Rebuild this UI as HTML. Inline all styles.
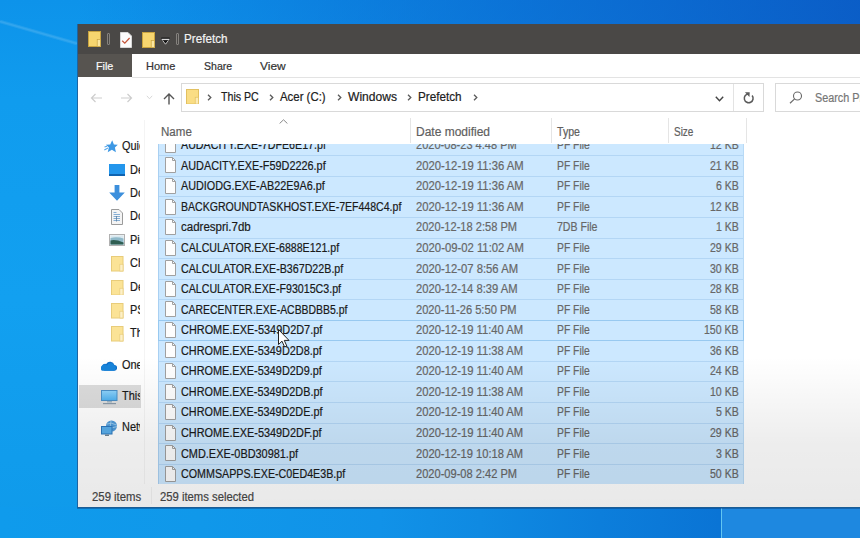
<!DOCTYPE html><html><head><meta charset="utf-8"><style>
*{box-sizing:border-box;margin:0;padding:0}
html,body{width:860px;height:538px;overflow:hidden}
body{position:relative;font-family:"Liberation Sans",sans-serif;font-size:12px;color:#1e1e1e;
background:linear-gradient(180deg,#0d93ea 0px,#109cee 100px,#12a0f0 300px,#0f9aea 538px)}
.a{position:absolute;white-space:nowrap}
.t{position:absolute;white-space:nowrap;transform-origin:0 0;line-height:1;-webkit-text-stroke:0.2px currentColor}
</style></head><body>
<div class="a" style="left:0;top:0;width:860px;height:40px;background:linear-gradient(90deg,rgba(10,100,210,0) 77px,rgba(10,100,210,0.2) 200px,rgba(10,90,200,0.55) 500px,rgba(10,80,190,0.8) 860px)"></div>
<svg style="position:absolute;left:0;top:0" width="77" height="80" viewBox="0 0 77 80"><path d="M0 21.5 L77 43.5" stroke="rgba(255,255,255,0.09)" stroke-width="3.5"/><path d="M0 21.5 L77 43.5" stroke="rgba(255,255,255,0.08)" stroke-width="1.4"/></svg>
<div class="a" style="left:0;top:507px;width:860px;height:31px;background:linear-gradient(90deg,#0f9bec 0px,#1098ea 200px,#1192e8 380px,#0f8ae2 480px,#0c7edb 600px,#0a74d5 720px)"></div>
<div class="a" style="left:720.5px;top:507px;width:1.5px;height:31px;background:#62c6f2"></div>
<div class="a" style="left:722px;top:507px;width:138px;height:31px;background:#1e88e0"></div>
<div class="a" style="left:77px;top:24px;width:783px;height:484px;background:#fff;border-left:1px solid #1d64a2;border-bottom:1px solid #1b5d95;box-shadow:0 1px 0 rgba(10,60,120,0.45)"></div>
<div class="a" style="left:78px;top:24px;width:782px;height:30px;background:#4a4846"></div>
<svg style="position:absolute;left:87.5px;top:30.8px" width="13" height="16" viewBox="0 0 13 16" preserveAspectRatio="none"><rect x="0.5" y="0.5" width="12" height="15" fill="#f7d66f" stroke="#c9a440" stroke-width="1"/><rect x="9.2" y="8.5" width="3.3" height="7" fill="#fbe6a0" stroke="#c9a440" stroke-width="0.7"/></svg>
<div class="a" style="left:107px;top:33px;width:3px;height:12px;border:1px solid #85827e;border-radius:1px"></div>
<svg style="position:absolute;left:120px;top:32px" width="12" height="16" viewBox="0 0 12 16"><path d="M0.5 0.5 H8 L11.5 4 V15.5 H0.5 Z" fill="#fbfbfb" stroke="#d6d6d6" stroke-width="1"/><path d="M2.2 8.8 L4.8 11.2 L9.6 6" fill="none" stroke="#c4553a" stroke-width="1.25"/></svg>
<svg style="position:absolute;left:141.5px;top:31.6px" width="13" height="16" viewBox="0 0 13 16" preserveAspectRatio="none"><rect x="0.5" y="0.5" width="12" height="15" fill="#f7d66f" stroke="#c9a440" stroke-width="1"/><rect x="9.2" y="8.5" width="3.3" height="7" fill="#fbe6a0" stroke="#c9a440" stroke-width="0.7"/></svg>
<svg style="position:absolute;left:161px;top:37px" width="9" height="8" viewBox="0 0 9 8"><rect x="0.3" y="0.6" width="8.4" height="2.6" fill="#111"/><rect x="0.6" y="1.8" width="7.8" height="1.1" fill="#f0f0f0"/><path d="M1.6 3.4 L4.5 7.2 L7.4 3.4" fill="#111" stroke="#e8e8e8" stroke-width="0.8"/></svg>
<div class="a" style="left:175.5px;top:33px;width:3px;height:12px;border:1px solid #85827e;border-radius:1px"></div>
<div class="t" style="left:184.06px;top:33.47px;font-size:12.5px;color:#f2f2f2;transform:scaleX(0.9354)">Prefetch</div>
<div class="a" style="left:78px;top:54px;width:54px;height:23px;background:#575450"></div>
<div class="t" style="left:95.97px;top:61.06px;font-size:11px;color:#fafafa;transform:scaleX(0.9794)">File</div>
<div class="t" style="left:145.88px;top:60.96px;font-size:11px;color:#333;transform:scaleX(1.0016)">Home</div>
<div class="t" style="left:203.58px;top:60.96px;font-size:11px;color:#333;transform:scaleX(0.9588)">Share</div>
<div class="t" style="left:259.88px;top:61.06px;font-size:11px;color:#333;transform:scaleX(1.0853)">View</div>
<div class="a" style="left:132px;top:77px;width:728px;height:1px;background:#e3e3e3"></div>
<svg style="position:absolute;left:90px;top:93px" width="13" height="10" viewBox="0 0 13 10"><path d="M12 5 H1.5 M5.5 1 L1.5 5 L5.5 9" fill="none" stroke="#cdcdcd" stroke-width="1.2"/></svg>
<svg style="position:absolute;left:119.5px;top:93px" width="13" height="10" viewBox="0 0 13 10"><path d="M1 5 H11.5 M7.5 1 L11.5 5 L7.5 9" fill="none" stroke="#cdcdcd" stroke-width="1.2"/></svg>
<svg style="position:absolute;left:145.5px;top:95px" width="7" height="5" viewBox="0 0 7 5"><path d="M0.8 0.8 L3.5 3.8 L6.2 0.8" fill="none" stroke="#d8d8d8" stroke-width="1"/></svg>
<svg style="position:absolute;left:163px;top:93px" width="12" height="12" viewBox="0 0 12 12"><path d="M6 11.5 V1.2 M1 6 L6 1 L11 6" fill="none" stroke="#555" stroke-width="1.4"/></svg>
<div class="a" style="left:181px;top:83px;width:583px;height:29px;border:1px solid #d9d9d9"></div>
<div class="a" style="left:733px;top:84px;width:1px;height:27px;background:#e3e3e3"></div>
<svg style="position:absolute;left:186px;top:88.6px" width="13" height="15.5" viewBox="0 0 13 16" preserveAspectRatio="none"><rect x="0.5" y="0.5" width="12" height="15" fill="#fadd84" stroke="#e2c060" stroke-width="1"/><rect x="9.2" y="8.5" width="3.3" height="7" fill="#fdebb5" stroke="#e2c060" stroke-width="0.7"/></svg>
<svg style="position:absolute;left:206.8px;top:94.3px" width="5" height="7" viewBox="0 0 5 7"><path d="M1 0.8 L3.8 3.5 L1 6.2" fill="none" stroke="#5a5a5a" stroke-width="1.3"/></svg>
<svg style="position:absolute;left:269px;top:94.3px" width="5" height="7" viewBox="0 0 5 7"><path d="M1 0.8 L3.8 3.5 L1 6.2" fill="none" stroke="#5a5a5a" stroke-width="1.3"/></svg>
<svg style="position:absolute;left:336.5px;top:94.3px" width="5" height="7" viewBox="0 0 5 7"><path d="M1 0.8 L3.8 3.5 L1 6.2" fill="none" stroke="#5a5a5a" stroke-width="1.3"/></svg>
<svg style="position:absolute;left:406.5px;top:94.3px" width="5" height="7" viewBox="0 0 5 7"><path d="M1 0.8 L3.8 3.5 L1 6.2" fill="none" stroke="#5a5a5a" stroke-width="1.3"/></svg>
<svg style="position:absolute;left:472.5px;top:94.3px" width="5" height="7" viewBox="0 0 5 7"><path d="M1 0.8 L3.8 3.5 L1 6.2" fill="none" stroke="#5a5a5a" stroke-width="1.3"/></svg>
<div class="t" style="left:220.50px;top:90.83px;font-size:12px;color:#202020;transform:scaleX(0.8845)">This PC</div>
<div class="t" style="left:280.10px;top:90.83px;font-size:12px;color:#202020;transform:scaleX(0.9506)">Acer (C:)</div>
<div class="t" style="left:347.50px;top:90.83px;font-size:12px;color:#202020;transform:scaleX(1.0061)">Windows</div>
<div class="t" style="left:418.10px;top:90.83px;font-size:12px;color:#202020;transform:scaleX(0.9743)">Prefetch</div>
<svg style="position:absolute;left:715px;top:96px" width="9" height="6" viewBox="0 0 9 6"><path d="M0.8 0.8 L4.5 4.8 L8.2 0.8" fill="none" stroke="#444" stroke-width="1.4"/></svg>
<svg style="position:absolute;left:742px;top:91px" width="14" height="14" viewBox="0 0 14 14"><path d="M10.1 4.5 A4.4 4.4 0 1 1 6.7 2.9" fill="none" stroke="#5a5a5a" stroke-width="1.5"/><path d="M2.9 1.2 L7.7 1.3 L7.5 5.9 Z" fill="#5a5a5a"/></svg>
<div class="a" style="left:775px;top:83px;width:100px;height:29px;border:1px solid #d9d9d9"></div>
<svg style="position:absolute;left:789px;top:91px" width="13" height="13" viewBox="0 0 13 13"><circle cx="8.5" cy="5" r="4" fill="none" stroke="#6a6a6a" stroke-width="1.1"/><path d="M5.6 7.9 L1 12.3" stroke="#6a6a6a" stroke-width="1.2"/></svg>
<div class="t" style="left:815.40px;top:91.73px;font-size:12px;color:#767676;transform:scaleX(0.9000)">Search Prefetch</div>
<div class="a" style="left:79px;top:385.2px;width:61.5px;height:22.6px;background:#dcdcdc"></div>
<div class="a" style="left:78px;top:112px;width:61.8px;height:372px;overflow:hidden">
<div class="t" style="left:43.90px;top:28.23px;font-size:12px;color:#1a1a1a;transform:scaleX(0.9100)">Quick access</div>
<div class="t" style="left:51.50px;top:51.83px;font-size:12px;color:#1a1a1a;transform:scaleX(0.9100)">Desktop</div>
<div class="t" style="left:51.50px;top:75.23px;font-size:12px;color:#1a1a1a;transform:scaleX(0.9100)">Downloads</div>
<div class="t" style="left:51.50px;top:98.33px;font-size:12px;color:#1a1a1a;transform:scaleX(0.9100)">Documents</div>
<div class="t" style="left:51.50px;top:122.03px;font-size:12px;color:#1a1a1a;transform:scaleX(0.9100)">Pictures</div>
<div class="t" style="left:51.50px;top:145.13px;font-size:12px;color:#1a1a1a;transform:scaleX(0.9100)">Chrome</div>
<div class="t" style="left:51.50px;top:168.93px;font-size:12px;color:#1a1a1a;transform:scaleX(0.9100)">Desktop</div>
<div class="t" style="left:51.50px;top:192.03px;font-size:12px;color:#1a1a1a;transform:scaleX(0.9100)">PS</div>
<div class="t" style="left:51.50px;top:215.23px;font-size:12px;color:#1a1a1a;transform:scaleX(0.9100)">Th</div>
<div class="t" style="left:43.90px;top:247.33px;font-size:12px;color:#1a1a1a;transform:scaleX(0.9100)">OneDrive</div>
<div class="t" style="left:43.90px;top:277.83px;font-size:12px;color:#1a1a1a;transform:scaleX(0.9100)">This PC</div>
<div class="t" style="left:43.90px;top:309.33px;font-size:12px;color:#1a1a1a;transform:scaleX(0.9100)">Network</div>
</div>
<svg style="position:absolute;left:103.5px;top:140px" width="14" height="13" viewBox="0 0 14 13"><path d="M8.2 0.3 L9.9 4.4 L13.8 4.7 L10.9 7.4 L11.9 12.2 L7.9 9.7 L3.7 12.2 L4.9 7.6 L1.9 4.7 L6.2 4.4 Z" fill="#3d98e4"/><path d="M0.3 10 L4 8 M0.5 7 L3 6.2" stroke="#5aa8ea" stroke-width="1.1"/></svg>
<div class="a" style="left:109.2px;top:164px;width:15.8px;height:11.5px;background:#2396ec;border-bottom:2px solid #0f63b0"></div>
<svg style="position:absolute;left:109px;top:185px" width="16" height="16" viewBox="0 0 16 16"><path d="M5.6 0 H10.4 V7.5 H15.8 L8 15.8 L0.2 7.5 H5.6 Z" fill="#3c8fdc"/></svg>
<svg style="position:absolute;left:111px;top:209px" width="12" height="16" viewBox="0 0 12 16"><path d="M0.5 0.5 H8 L11.5 4 V15.5 H0.5 Z" fill="#f4f4f4" stroke="#9b9b9b" stroke-width="1"/><path d="M2.5 3.5 H5.5 M2.5 5.5 H9 M2.5 7.5 H9 M2.5 9.5 H9 M2.5 11.5 H9" stroke="#6a9ccc" stroke-width="0.8"/><path d="M5.5 7 V12.5" stroke="#5b7f9e" stroke-width="0.8"/></svg>
<svg style="position:absolute;left:109px;top:234px" width="16" height="12" viewBox="0 0 16 12"><rect x="0.5" y="0.5" width="15" height="11" fill="#f2f4f5" stroke="#b0b0b0" stroke-width="1"/><rect x="1.5" y="1.5" width="13" height="9" fill="#d9e8ef"/><path d="M1.5 4 Q8 2.5 14.5 4.5 V10.5 H1.5 Z" fill="#8fb9c9"/><path d="M1.5 6.5 Q6 5 14.5 8.5 V10.5 H1.5 Z" fill="#2f5e52"/></svg>
<svg style="position:absolute;left:111.3px;top:256.0px" width="12.5" height="15.5" viewBox="0 0 13 16" preserveAspectRatio="none"><rect x="0.5" y="0.5" width="12" height="15" fill="#fbe396" stroke="#e8cb78" stroke-width="1"/><rect x="9.2" y="8.5" width="3.3" height="7" fill="#fdf0c8" stroke="#e8cb78" stroke-width="0.7"/></svg>
<svg style="position:absolute;left:111.3px;top:279.5px" width="12.5" height="15.5" viewBox="0 0 13 16" preserveAspectRatio="none"><rect x="0.5" y="0.5" width="12" height="15" fill="#fbe396" stroke="#e8cb78" stroke-width="1"/><rect x="9.2" y="8.5" width="3.3" height="7" fill="#fdf0c8" stroke="#e8cb78" stroke-width="0.7"/></svg>
<svg style="position:absolute;left:111.3px;top:303.0px" width="12.5" height="15.5" viewBox="0 0 13 16" preserveAspectRatio="none"><rect x="0.5" y="0.5" width="12" height="15" fill="#fbe396" stroke="#e8cb78" stroke-width="1"/><rect x="9.2" y="8.5" width="3.3" height="7" fill="#fdf0c8" stroke="#e8cb78" stroke-width="0.7"/></svg>
<svg style="position:absolute;left:111.3px;top:326.3px" width="12.5" height="15.5" viewBox="0 0 13 16" preserveAspectRatio="none"><rect x="0.5" y="0.5" width="12" height="15" fill="#fbe396" stroke="#e8cb78" stroke-width="1"/><rect x="9.2" y="8.5" width="3.3" height="7" fill="#fdf0c8" stroke="#e8cb78" stroke-width="0.7"/></svg>
<svg style="position:absolute;left:101px;top:359.5px" width="16" height="11" viewBox="0 0 16 11"><path d="M3.5 10.8 H13 A2.9 2.9 0 0 0 13.4 5 A4.5 4.5 0 0 0 5.2 4 A3.4 3.4 0 0 0 3.5 10.8 Z" fill="#0f6fc9"/><path d="M1 10.8 H13 A2.9 2.9 0 0 0 13.4 5.5 A4 4 0 0 0 6 5.5 A2.8 2.8 0 0 0 1 10.8 Z" fill="#1784da"/></svg>
<svg style="position:absolute;left:100.5px;top:389.5px" width="17" height="15" viewBox="0 0 17 15"><defs><linearGradient id="pcg" x1="0" y1="0" x2="0" y2="1"><stop offset="0" stop-color="#8fd3fa"/><stop offset="1" stop-color="#4fb0ee"/></linearGradient></defs><rect x="0.5" y="0.5" width="15.5" height="10" fill="url(#pcg)" stroke="#4a8fc6" stroke-width="1"/><rect x="6" y="11" width="5" height="1.5" fill="#9fb3c2"/><rect x="2" y="13" width="13" height="1.2" fill="#8a9aa8"/></svg>
<svg style="position:absolute;left:100.5px;top:419.5px" width="17" height="17" viewBox="0 0 17 17"><circle cx="10.5" cy="6" r="5.5" fill="#4f9ad8"/><path d="M6 4 Q10.5 2 15.5 5 M5.5 7.5 Q10.5 9 16 6.5 M10 0.8 Q8 6 11 11.3" fill="none" stroke="#a9d4f2" stroke-width="0.8"/><rect x="0.5" y="6.5" width="10.5" height="7.5" fill="#5aaeea" stroke="#2d78bd" stroke-width="1"/><rect x="4" y="14.5" width="4" height="1.5" fill="#6f8596"/></svg>
<div class="a" style="left:144px;top:120px;width:1px;height:364px;background:#f4f4f4"></div>
<div class="t" style="left:160.80px;top:125.63px;font-size:12px;color:#606060;transform:scaleX(0.9633)">Name</div>
<svg style="position:absolute;left:278.5px;top:119px" width="9" height="5" viewBox="0 0 9 5"><path d="M0.6 4.5 L4.5 0.8 L8.4 4.5" fill="none" stroke="#888" stroke-width="1"/></svg>
<div class="t" style="left:415.60px;top:125.63px;font-size:12px;color:#606060;transform:scaleX(0.9991)">Date modified</div>
<div class="t" style="left:556.50px;top:125.63px;font-size:12px;color:#606060;transform:scaleX(0.8823)">Type</div>
<div class="t" style="left:673.70px;top:125.63px;font-size:12px;color:#606060;transform:scaleX(0.8309)">Size</div>
<div class="a" style="left:409.5px;top:118px;width:1px;height:25px;background:#e5e5e5"></div>
<div class="a" style="left:550.7px;top:118px;width:1px;height:25px;background:#e5e5e5"></div>
<div class="a" style="left:667.9px;top:118px;width:1px;height:25px;background:#e5e5e5"></div>
<div class="a" style="left:745.9px;top:118px;width:1px;height:25px;background:#e5e5e5"></div>
<div class="a" style="left:158px;top:143.6px;width:585.5px;height:340.70px;overflow:hidden;background:#cce8ff">
<div class="a" style="left:0;top:-8.86px;width:585.5px;height:1px;background:#b3d6f5"></div>
<div class="a" style="left:0;top:11.70px;width:585.5px;height:1px;background:#b3d6f5"></div>
<div class="a" style="left:0;top:32.26px;width:585.5px;height:1px;background:#b3d6f5"></div>
<div class="a" style="left:0;top:52.82px;width:585.5px;height:1px;background:#b3d6f5"></div>
<div class="a" style="left:0;top:73.38px;width:585.5px;height:1px;background:#b3d6f5"></div>
<div class="a" style="left:0;top:93.94px;width:585.5px;height:1px;background:#b3d6f5"></div>
<div class="a" style="left:0;top:114.50px;width:585.5px;height:1px;background:#b3d6f5"></div>
<div class="a" style="left:0;top:135.06px;width:585.5px;height:1px;background:#b3d6f5"></div>
<div class="a" style="left:0;top:155.62px;width:585.5px;height:1px;background:#b3d6f5"></div>
<div class="a" style="left:0;top:176.18px;width:585.5px;height:1px;background:#b3d6f5"></div>
<div class="a" style="left:0;top:196.74px;width:585.5px;height:1px;background:#b3d6f5"></div>
<div class="a" style="left:0;top:217.30px;width:585.5px;height:1px;background:#b3d6f5"></div>
<div class="a" style="left:0;top:237.86px;width:585.5px;height:1px;background:#b3d6f5"></div>
<div class="a" style="left:0;top:258.42px;width:585.5px;height:1px;background:#b3d6f5"></div>
<div class="a" style="left:0;top:278.98px;width:585.5px;height:1px;background:#b3d6f5"></div>
<div class="a" style="left:0;top:299.54px;width:585.5px;height:1px;background:#b3d6f5"></div>
<div class="a" style="left:0;top:320.10px;width:585.5px;height:1px;background:#b3d6f5"></div>
<div class="a" style="left:0;top:340.66px;width:585.5px;height:1px;background:#b3d6f5"></div>
<div class="a" style="left:0;top:0;width:1px;height:400px;background:#a9d0f2"></div>
<div class="a" style="left:584.5px;top:0;width:1px;height:400px;background:#b8daf6"></div>
<div class="a" style="left:0;top:176.18px;width:585.5px;height:21.56px;border:1px solid #98c9f0"></div>
<svg style="position:absolute;left:6px;top:-6.759999999999991px" width="13" height="16" viewBox="0 0 13 16"><path d="M1.5 0.5 H8.5 L11.5 3.5 V15.5 H1.5 Z" fill="#fdfdfd" stroke="#a0a0a0" stroke-width="1"/><path d="M8.5 0.5 V3.5 H11.5" fill="none" stroke="#a0a0a0" stroke-width="1"/></svg>
<div class="t" style="left:22.60px;top:-4.43px;font-size:12px;color:#1a1a1a;transform:scaleX(0.8920)">AUDACITY.EXE-7DFE6E17.pf</div>
<div class="t" style="left:257.70px;top:-4.43px;font-size:12px;color:#676767;transform:scaleX(0.9213)">2020-08-23 4:48 PM</div>
<div class="t" style="left:398.70px;top:-4.43px;font-size:12px;color:#676767;transform:scaleX(0.8610)">PF File</div>
<div class="t" style="left:552.12px;top:-4.43px;font-size:12px;color:#676767;transform:scaleX(0.8800)">12 KB</div>
<svg style="position:absolute;left:6px;top:13.800000000000011px" width="13" height="16" viewBox="0 0 13 16"><path d="M1.5 0.5 H8.5 L11.5 3.5 V15.5 H1.5 Z" fill="#fdfdfd" stroke="#a0a0a0" stroke-width="1"/><path d="M8.5 0.5 V3.5 H11.5" fill="none" stroke="#a0a0a0" stroke-width="1"/></svg>
<div class="t" style="left:22.60px;top:16.13px;font-size:12px;color:#1a1a1a;transform:scaleX(0.9050)">AUDACITY.EXE-F59D2226.pf</div>
<div class="t" style="left:257.70px;top:16.13px;font-size:12px;color:#676767;transform:scaleX(0.9396)">2020-12-19 11:36 AM</div>
<div class="t" style="left:398.70px;top:16.13px;font-size:12px;color:#676767;transform:scaleX(0.8610)">PF File</div>
<div class="t" style="left:552.12px;top:16.13px;font-size:12px;color:#676767;transform:scaleX(0.8800)">21 KB</div>
<svg style="position:absolute;left:6px;top:34.360000000000014px" width="13" height="16" viewBox="0 0 13 16"><path d="M1.5 0.5 H8.5 L11.5 3.5 V15.5 H1.5 Z" fill="#fdfdfd" stroke="#a0a0a0" stroke-width="1"/><path d="M8.5 0.5 V3.5 H11.5" fill="none" stroke="#a0a0a0" stroke-width="1"/></svg>
<div class="t" style="left:22.60px;top:36.69px;font-size:12px;color:#1a1a1a;transform:scaleX(0.9013)">AUDIODG.EXE-AB22E9A6.pf</div>
<div class="t" style="left:257.70px;top:36.69px;font-size:12px;color:#676767;transform:scaleX(0.9396)">2020-12-19 11:36 AM</div>
<div class="t" style="left:398.70px;top:36.69px;font-size:12px;color:#676767;transform:scaleX(0.8610)">PF File</div>
<div class="t" style="left:558.01px;top:36.69px;font-size:12px;color:#676767;transform:scaleX(0.8800)">6 KB</div>
<svg style="position:absolute;left:6px;top:54.920000000000016px" width="13" height="16" viewBox="0 0 13 16"><path d="M1.5 0.5 H8.5 L11.5 3.5 V15.5 H1.5 Z" fill="#fdfdfd" stroke="#a0a0a0" stroke-width="1"/><path d="M8.5 0.5 V3.5 H11.5" fill="none" stroke="#a0a0a0" stroke-width="1"/></svg>
<div class="t" style="left:22.60px;top:57.25px;font-size:12px;color:#1a1a1a;transform:scaleX(0.8795)">BACKGROUNDTASKHOST.EXE-7EF448C4.pf</div>
<div class="t" style="left:257.70px;top:57.25px;font-size:12px;color:#676767;transform:scaleX(0.9396)">2020-12-19 11:36 AM</div>
<div class="t" style="left:398.70px;top:57.25px;font-size:12px;color:#676767;transform:scaleX(0.8610)">PF File</div>
<div class="t" style="left:552.12px;top:57.25px;font-size:12px;color:#676767;transform:scaleX(0.8800)">12 KB</div>
<svg style="position:absolute;left:6px;top:75.48000000000002px" width="13" height="16" viewBox="0 0 13 16"><path d="M1.5 0.5 H8.5 L11.5 3.5 V15.5 H1.5 Z" fill="#fdfdfd" stroke="#a0a0a0" stroke-width="1"/><path d="M8.5 0.5 V3.5 H11.5" fill="none" stroke="#a0a0a0" stroke-width="1"/></svg>
<div class="t" style="left:22.60px;top:77.81px;font-size:12px;color:#1a1a1a;transform:scaleX(0.9590)">cadrespri.7db</div>
<div class="t" style="left:257.70px;top:77.81px;font-size:12px;color:#676767;transform:scaleX(0.9231)">2020-12-18 2:58 PM</div>
<div class="t" style="left:398.70px;top:77.81px;font-size:12px;color:#676767;transform:scaleX(0.8790)">7DB File</div>
<div class="t" style="left:558.01px;top:77.81px;font-size:12px;color:#676767;transform:scaleX(0.8800)">1 KB</div>
<svg style="position:absolute;left:6px;top:96.04000000000002px" width="13" height="16" viewBox="0 0 13 16"><path d="M1.5 0.5 H8.5 L11.5 3.5 V15.5 H1.5 Z" fill="#fdfdfd" stroke="#a0a0a0" stroke-width="1"/><path d="M8.5 0.5 V3.5 H11.5" fill="none" stroke="#a0a0a0" stroke-width="1"/></svg>
<div class="t" style="left:22.60px;top:98.37px;font-size:12px;color:#1a1a1a;transform:scaleX(0.8836)">CALCULATOR.EXE-6888E121.pf</div>
<div class="t" style="left:257.70px;top:98.37px;font-size:12px;color:#676767;transform:scaleX(0.9414)">2020-09-02 11:02 AM</div>
<div class="t" style="left:398.70px;top:98.37px;font-size:12px;color:#676767;transform:scaleX(0.8610)">PF File</div>
<div class="t" style="left:552.12px;top:98.37px;font-size:12px;color:#676767;transform:scaleX(0.8800)">29 KB</div>
<svg style="position:absolute;left:6px;top:116.60000000000005px" width="13" height="16" viewBox="0 0 13 16"><path d="M1.5 0.5 H8.5 L11.5 3.5 V15.5 H1.5 Z" fill="#fdfdfd" stroke="#a0a0a0" stroke-width="1"/><path d="M8.5 0.5 V3.5 H11.5" fill="none" stroke="#a0a0a0" stroke-width="1"/></svg>
<div class="t" style="left:22.60px;top:118.93px;font-size:12px;color:#1a1a1a;transform:scaleX(0.8900)">CALCULATOR.EXE-B367D22B.pf</div>
<div class="t" style="left:257.70px;top:118.93px;font-size:12px;color:#676767;transform:scaleX(0.9381)">2020-12-07 8:56 AM</div>
<div class="t" style="left:398.70px;top:118.93px;font-size:12px;color:#676767;transform:scaleX(0.8610)">PF File</div>
<div class="t" style="left:552.12px;top:118.93px;font-size:12px;color:#676767;transform:scaleX(0.8800)">30 KB</div>
<svg style="position:absolute;left:6px;top:137.16px" width="13" height="16" viewBox="0 0 13 16"><path d="M1.5 0.5 H8.5 L11.5 3.5 V15.5 H1.5 Z" fill="#fdfdfd" stroke="#a0a0a0" stroke-width="1"/><path d="M8.5 0.5 V3.5 H11.5" fill="none" stroke="#a0a0a0" stroke-width="1"/></svg>
<div class="t" style="left:22.60px;top:139.49px;font-size:12px;color:#1a1a1a;transform:scaleX(0.8877)">CALCULATOR.EXE-F93015C3.pf</div>
<div class="t" style="left:257.70px;top:139.49px;font-size:12px;color:#676767;transform:scaleX(0.9343)">2020-12-14 8:39 AM</div>
<div class="t" style="left:398.70px;top:139.49px;font-size:12px;color:#676767;transform:scaleX(0.8610)">PF File</div>
<div class="t" style="left:552.12px;top:139.49px;font-size:12px;color:#676767;transform:scaleX(0.8800)">28 KB</div>
<svg style="position:absolute;left:6px;top:157.72000000000006px" width="13" height="16" viewBox="0 0 13 16"><path d="M1.5 0.5 H8.5 L11.5 3.5 V15.5 H1.5 Z" fill="#fdfdfd" stroke="#a0a0a0" stroke-width="1"/><path d="M8.5 0.5 V3.5 H11.5" fill="none" stroke="#a0a0a0" stroke-width="1"/></svg>
<div class="t" style="left:22.60px;top:160.05px;font-size:12px;color:#1a1a1a;transform:scaleX(0.8696)">CARECENTER.EXE-ACBBDBB5.pf</div>
<div class="t" style="left:257.70px;top:160.05px;font-size:12px;color:#676767;transform:scaleX(0.9271)">2020-11-26 5:50 PM</div>
<div class="t" style="left:398.70px;top:160.05px;font-size:12px;color:#676767;transform:scaleX(0.8610)">PF File</div>
<div class="t" style="left:552.12px;top:160.05px;font-size:12px;color:#676767;transform:scaleX(0.8800)">58 KB</div>
<svg style="position:absolute;left:6px;top:178.28px" width="13" height="16" viewBox="0 0 13 16"><path d="M1.5 0.5 H8.5 L11.5 3.5 V15.5 H1.5 Z" fill="#fdfdfd" stroke="#a0a0a0" stroke-width="1"/><path d="M8.5 0.5 V3.5 H11.5" fill="none" stroke="#a0a0a0" stroke-width="1"/></svg>
<div class="t" style="left:22.60px;top:180.61px;font-size:12px;color:#1a1a1a;transform:scaleX(0.9092)">CHROME.EXE-5349D2D7.pf</div>
<div class="t" style="left:257.70px;top:180.61px;font-size:12px;color:#676767;transform:scaleX(0.9352)">2020-12-19 11:40 AM</div>
<div class="t" style="left:398.70px;top:180.61px;font-size:12px;color:#676767;transform:scaleX(0.8610)">PF File</div>
<div class="t" style="left:546.25px;top:180.61px;font-size:12px;color:#676767;transform:scaleX(0.8800)">150 KB</div>
<svg style="position:absolute;left:6px;top:198.84000000000006px" width="13" height="16" viewBox="0 0 13 16"><path d="M1.5 0.5 H8.5 L11.5 3.5 V15.5 H1.5 Z" fill="#fdfdfd" stroke="#a0a0a0" stroke-width="1"/><path d="M8.5 0.5 V3.5 H11.5" fill="none" stroke="#a0a0a0" stroke-width="1"/></svg>
<div class="t" style="left:22.60px;top:201.17px;font-size:12px;color:#1a1a1a;transform:scaleX(0.9060)">CHROME.EXE-5349D2D8.pf</div>
<div class="t" style="left:257.70px;top:201.17px;font-size:12px;color:#676767;transform:scaleX(0.9352)">2020-12-19 11:38 AM</div>
<div class="t" style="left:398.70px;top:201.17px;font-size:12px;color:#676767;transform:scaleX(0.8610)">PF File</div>
<div class="t" style="left:552.12px;top:201.17px;font-size:12px;color:#676767;transform:scaleX(0.8800)">36 KB</div>
<svg style="position:absolute;left:6px;top:219.4px" width="13" height="16" viewBox="0 0 13 16"><path d="M1.5 0.5 H8.5 L11.5 3.5 V15.5 H1.5 Z" fill="#fdfdfd" stroke="#a0a0a0" stroke-width="1"/><path d="M8.5 0.5 V3.5 H11.5" fill="none" stroke="#a0a0a0" stroke-width="1"/></svg>
<div class="t" style="left:22.60px;top:221.73px;font-size:12px;color:#1a1a1a;transform:scaleX(0.9060)">CHROME.EXE-5349D2D9.pf</div>
<div class="t" style="left:257.70px;top:221.73px;font-size:12px;color:#676767;transform:scaleX(0.9352)">2020-12-19 11:40 AM</div>
<div class="t" style="left:398.70px;top:221.73px;font-size:12px;color:#676767;transform:scaleX(0.8610)">PF File</div>
<div class="t" style="left:552.12px;top:221.73px;font-size:12px;color:#676767;transform:scaleX(0.8800)">24 KB</div>
<svg style="position:absolute;left:6px;top:239.96px" width="13" height="16" viewBox="0 0 13 16"><path d="M1.5 0.5 H8.5 L11.5 3.5 V15.5 H1.5 Z" fill="#fdfdfd" stroke="#a0a0a0" stroke-width="1"/><path d="M8.5 0.5 V3.5 H11.5" fill="none" stroke="#a0a0a0" stroke-width="1"/></svg>
<div class="t" style="left:22.60px;top:242.29px;font-size:12px;color:#1a1a1a;transform:scaleX(0.9026)">CHROME.EXE-5349D2DB.pf</div>
<div class="t" style="left:257.70px;top:242.29px;font-size:12px;color:#676767;transform:scaleX(0.9352)">2020-12-19 11:38 AM</div>
<div class="t" style="left:398.70px;top:242.29px;font-size:12px;color:#676767;transform:scaleX(0.8610)">PF File</div>
<div class="t" style="left:552.12px;top:242.29px;font-size:12px;color:#676767;transform:scaleX(0.8800)">10 KB</div>
<svg style="position:absolute;left:6px;top:260.52px" width="13" height="16" viewBox="0 0 13 16"><path d="M1.5 0.5 H8.5 L11.5 3.5 V15.5 H1.5 Z" fill="#fdfdfd" stroke="#a0a0a0" stroke-width="1"/><path d="M8.5 0.5 V3.5 H11.5" fill="none" stroke="#a0a0a0" stroke-width="1"/></svg>
<div class="t" style="left:22.60px;top:262.85px;font-size:12px;color:#1a1a1a;transform:scaleX(0.9026)">CHROME.EXE-5349D2DE.pf</div>
<div class="t" style="left:257.70px;top:262.85px;font-size:12px;color:#676767;transform:scaleX(0.9352)">2020-12-19 11:40 AM</div>
<div class="t" style="left:398.70px;top:262.85px;font-size:12px;color:#676767;transform:scaleX(0.8610)">PF File</div>
<div class="t" style="left:558.01px;top:262.85px;font-size:12px;color:#676767;transform:scaleX(0.8800)">5 KB</div>
<svg style="position:absolute;left:6px;top:281.08000000000004px" width="13" height="16" viewBox="0 0 13 16"><path d="M1.5 0.5 H8.5 L11.5 3.5 V15.5 H1.5 Z" fill="#fdfdfd" stroke="#a0a0a0" stroke-width="1"/><path d="M8.5 0.5 V3.5 H11.5" fill="none" stroke="#a0a0a0" stroke-width="1"/></svg>
<div class="t" style="left:22.60px;top:283.41px;font-size:12px;color:#1a1a1a;transform:scaleX(0.9080)">CHROME.EXE-5349D2DF.pf</div>
<div class="t" style="left:257.70px;top:283.41px;font-size:12px;color:#676767;transform:scaleX(0.9352)">2020-12-19 11:40 AM</div>
<div class="t" style="left:398.70px;top:283.41px;font-size:12px;color:#676767;transform:scaleX(0.8610)">PF File</div>
<div class="t" style="left:552.12px;top:283.41px;font-size:12px;color:#676767;transform:scaleX(0.8800)">29 KB</div>
<svg style="position:absolute;left:6px;top:301.64px" width="13" height="16" viewBox="0 0 13 16"><path d="M1.5 0.5 H8.5 L11.5 3.5 V15.5 H1.5 Z" fill="#fdfdfd" stroke="#a0a0a0" stroke-width="1"/><path d="M8.5 0.5 V3.5 H11.5" fill="none" stroke="#a0a0a0" stroke-width="1"/></svg>
<div class="t" style="left:22.60px;top:303.97px;font-size:12px;color:#1a1a1a;transform:scaleX(0.9087)">CMD.EXE-0BD30981.pf</div>
<div class="t" style="left:257.70px;top:303.97px;font-size:12px;color:#676767;transform:scaleX(0.9279)">2020-12-19 10:18 AM</div>
<div class="t" style="left:398.70px;top:303.97px;font-size:12px;color:#676767;transform:scaleX(0.8610)">PF File</div>
<div class="t" style="left:558.01px;top:303.97px;font-size:12px;color:#676767;transform:scaleX(0.8800)">3 KB</div>
<svg style="position:absolute;left:6px;top:322.20000000000005px" width="13" height="16" viewBox="0 0 13 16"><path d="M1.5 0.5 H8.5 L11.5 3.5 V15.5 H1.5 Z" fill="#fdfdfd" stroke="#a0a0a0" stroke-width="1"/><path d="M8.5 0.5 V3.5 H11.5" fill="none" stroke="#a0a0a0" stroke-width="1"/></svg>
<div class="t" style="left:22.60px;top:324.53px;font-size:12px;color:#1a1a1a;transform:scaleX(0.8924)">COMMSAPPS.EXE-C0ED4E3B.pf</div>
<div class="t" style="left:257.70px;top:324.53px;font-size:12px;color:#676767;transform:scaleX(0.9231)">2020-09-08 2:42 PM</div>
<div class="t" style="left:398.70px;top:324.53px;font-size:12px;color:#676767;transform:scaleX(0.8610)">PF File</div>
<div class="t" style="left:552.12px;top:324.53px;font-size:12px;color:#676767;transform:scaleX(0.8800)">50 KB</div>
</div>
<div class="t" style="left:92.10px;top:490.73px;font-size:12px;color:#474747;transform:scaleX(0.9460)">259 items</div>
<div class="a" style="left:151px;top:487px;width:1px;height:17px;background:#f2f2f2"></div>
<div class="t" style="left:160.30px;top:490.73px;font-size:12px;color:#474747;transform:scaleX(0.9396)">259 items selected</div>
<div class="a" style="left:78px;top:112px;width:782px;height:395px;background:linear-gradient(180deg,rgba(0,0,0,0) 0%,rgba(0,0,0,0) 62%,rgba(0,0,0,0.07) 84%,rgba(0,0,0,0.085) 100%);pointer-events:none"></div>
<svg style="position:absolute;left:278px;top:329px" width="13" height="19" viewBox="0 0 13 19"><path d="M0.5 0.5 V15.5 L4 12.2 L6.6 18 L8.8 17 L6.3 11.4 H11 Z" fill="#fff" stroke="#222" stroke-width="1"/></svg>
</body></html>
